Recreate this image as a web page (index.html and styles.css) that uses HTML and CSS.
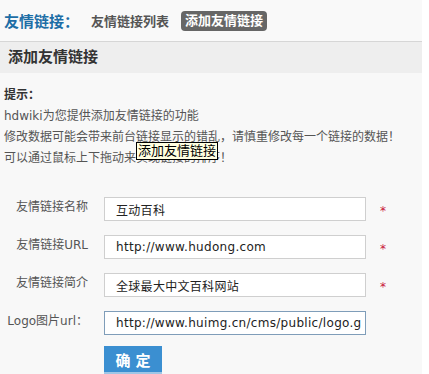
FILE: index.html
```html
<!DOCTYPE html>
<html lang="zh">
<head>
<meta charset="utf-8">
<title>添加友情链接</title>
<link rel="stylesheet" href="styles.css">
</head>
<body>
<div class="page">
  <div class="top">
    <span class="title">友情链接：</span>
    <a class="tab">友情链接列表</a>
    <a class="tab active">添加友情链接</a>
  </div>
  <div class="sec-head">添加友情链接</div>
  <div class="tips">
    <div class="tip-title">提示：</div>
    <div>hdwiki为您提供添加友情链接的功能</div>
    <div>修改数据可能会带来前台链接显示的错乱，请慎重修改每一个链接的数据！</div>
    <div>可以通过鼠标上下拖动来实现链接的排序！</div>
    <div class="tooltip">添加友情链接</div>
  </div>
  <form class="form">
    <label class="lbl">友情链接名称</label>
    <input class="inp" type="text" value="互动百科">
    <span class="req">*</span>

    <label class="lbl">友情链接URL</label>
    <input class="inp" type="text" value="http://www.hudong.com">
    <span class="req">*</span>

    <label class="lbl">友情链接简介</label>
    <input class="inp" type="text" value="全球最大中文百科网站">
    <span class="req">*</span>

    <label class="lbl">Logo图片url：</label>
    <input class="inp focus" type="text" value="http://www.huimg.cn/cms/public/logo.gif">
    <span></span>

    <span></span>
    <div class="btn-cell"><button class="btn" type="button">确 定</button></div>
    <span></span>
  </form>
</div>
</body>
</html>
```
FILE: styles.css
```css
html, body {
  margin: 0;
  padding: 0;
  background: #ffffff;
}
body {
  font-family: "DejaVu Sans", "Noto Sans CJK SC", sans-serif;
  font-size: 12px;
  color: #555;
}
.page {
  width: 422px;
  min-height: 374px;
  background: #f8f8f8;
}
.top {
  height: 41px;
  display: flex;
  align-items: center;
  padding-left: 4px;
  box-sizing: border-box;
  background: #f9f9f9;
}
.title {
  font-size: 15px;
  font-weight: bold;
  color: #1d6ea6;
  margin-right: 12px;
}
.tab {
  font-size: 13px;
  font-weight: bold;
  color: #555;
  margin-right: 12px;
}
.tab.active {
  background: #666;
  color: #fff;
  padding: 2px 4px;
  border-radius: 4px;
  line-height: 16px;
}
.sec-head {
  border-top: 1px solid #d6d6d6;
  height: 31px;
  line-height: 31px;
  background: #eeeeee;
  padding-left: 8px;
  font-size: 15px;
  font-weight: bold;
  color: #333;
}
.tips {
  position: relative;
  padding: 12px 4px 0;
  line-height: 21px;
  color: #555;
}
.tip-title {
  font-weight: bold;
  color: #333;
}
.tooltip {
  position: absolute;
  left: 136px;
  top: 69px;
  background: #ffffe1;
  border: 1px solid #000;
  color: #000;
  font-size: 13px;
  line-height: 16px;
  padding: 0 1px;
}
.form {
  display: grid;
  grid-template-columns: 88px 262px auto;
  column-gap: 16px;
  row-gap: 12px;
  margin: 28px 0 0;
  padding: 0;
}
.lbl {
  text-align: right;
  padding-top: 2px;
  line-height: 16px;
  color: #555;
  white-space: nowrap;
}
.inp {
  box-sizing: border-box;
  width: 262px;
  height: 24px;
  margin: 0;
  border: 1px solid #cfcfcf;
  background: #fff;
  padding: 0 4px 0 11px;
  font-family: "DejaVu Sans", "Noto Sans CJK SC", sans-serif;
  font-size: 12px;
  letter-spacing: 0.3px;
  color: #222;
  outline: none;
}
.inp.focus {
  border-color: #7f9db9;
}
.req {
  color: #c8163c;
  font-size: 12px;
  line-height: 24px;
  padding-top: 2px;
  margin-left: -2px;
}
.btn-cell {
  margin-top: -1px;
}
.btn {
  width: 58px;
  height: 28px;
  border: none;
  border-bottom: 2px solid #9fc6e6;
  background: #3b8fd1;
  color: #fff;
  font-family: "DejaVu Sans", "Noto Sans CJK SC", sans-serif;
  font-size: 15px;
  font-weight: bold;
  padding: 0;
  margin: 0;
}
```
